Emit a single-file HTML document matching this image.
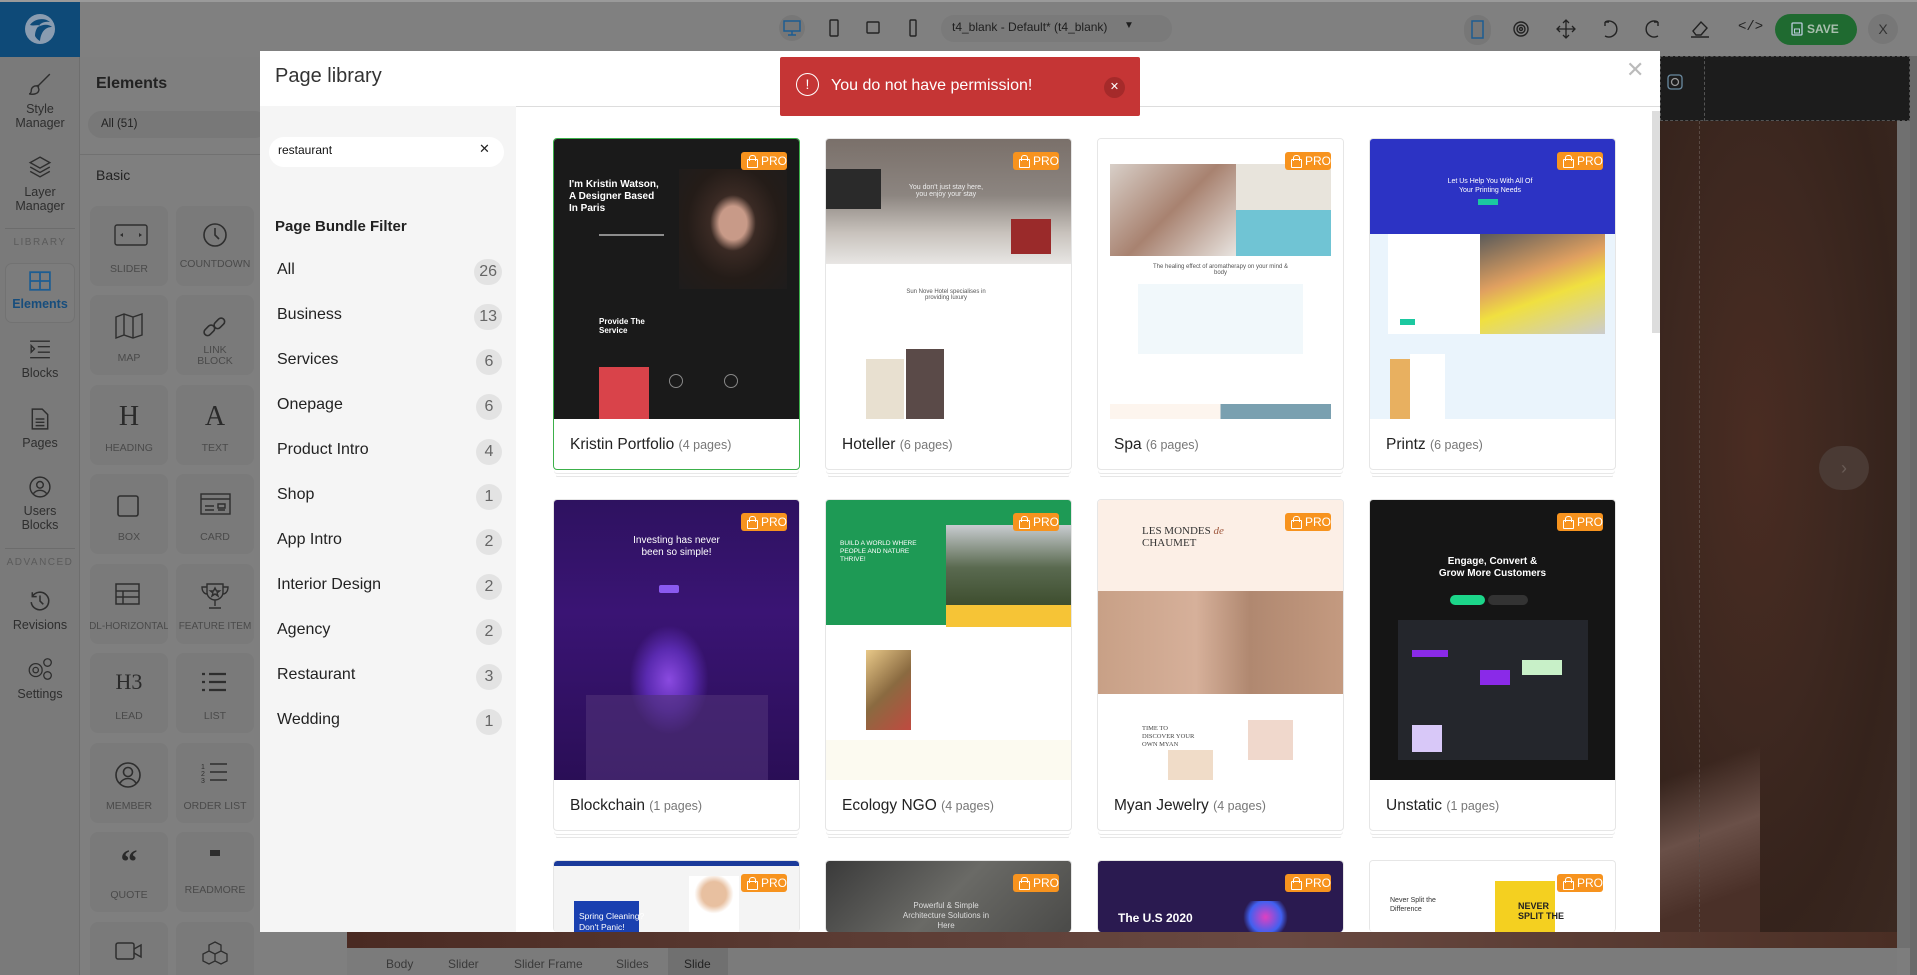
<!DOCTYPE html>
<html><head><meta charset="utf-8">
<style>
*{box-sizing:border-box;margin:0;padding:0}
html,body{width:1917px;height:975px;overflow:hidden}
body{position:relative;background:#7d7d7d;font-family:"Liberation Sans",Arial,sans-serif;color:#222}
.a{position:absolute}
.rail{left:0;top:57px;width:80px;height:918px;background:#7a7a7a;border-right:1px solid #6e6e6e}
.ri{position:absolute;left:0;width:80px;text-align:center;font-size:12.5px;line-height:14px;color:#2e2e2e}
.ri svg{display:block;margin:0 auto 6px}
.sec{position:absolute;left:0;width:80px;text-align:center;font-size:10px;letter-spacing:1.5px;color:#5b5b5b}
.hr{position:absolute;left:5px;width:70px;height:1px;background:#6c6c6c}
.panel{left:80px;top:57px;width:272px;height:918px;background:#7f7f7f;border-right:1px solid #6d6d6d;overflow:hidden}
.tile{position:absolute;width:78px;height:80px;background:#7a7a7a;border-radius:8px;text-align:center;font-size:10.5px;color:#4a4a4a;overflow:hidden}
.tile svg{position:absolute;left:24px;top:18px}
.tile span{position:absolute;left:0;right:0;top:57px}
.modal{left:260px;top:51px;width:1400px;height:881px;background:#fff;overflow:hidden}
.side{left:0;top:55px;width:256px;height:826px;background:#f5f5f5}
.cat{position:absolute;left:17px;width:225px;font-size:16px;color:#222}
.bd{position:absolute;right:0;top:-2px;height:26px;min-width:26px;padding:0 5px;border-radius:13px;background:#e3e3e3;color:#666;font-size:16px;line-height:26px;text-align:center}
.card{position:absolute;width:247px;height:332px;background:#fff;border:1px solid #e6e6e6;border-radius:4px;box-shadow:0 4px 0 -1px #fff,0 5px 0 -1px #e8e8e8,0 9px 0 -3px #fff,0 10px 0 -3px #e6e6e6}
.card.r3{height:72px;box-shadow:none;border-bottom:none;overflow:hidden}
.card.r3 .img{height:72px}
.img{position:absolute;left:0;top:0;width:245px;height:280px;overflow:hidden;border-radius:3px 3px 0 0}
.lbl{position:absolute;left:16px;top:297px;font-size:15.5px;color:#222;white-space:nowrap}
.lbl small{font-size:12.5px;color:#777}
.pro{position:absolute;right:12px;top:13px;width:46px;height:18px;background:#f7931e;border-radius:3px;color:#fff;font-size:12px;line-height:18px;padding-left:20px}
.pro:before{content:"";position:absolute;left:6px;top:7px;width:9px;height:7px;border:1.3px solid #fff;border-radius:1px}
.pro:after{content:"";position:absolute;left:8px;top:3px;width:5px;height:5px;border:1.3px solid #fff;border-bottom:none;border-radius:3px 3px 0 0}
.ln{position:absolute;height:2px;background:rgba(255,255,255,.5)}
.bc{position:absolute;top:957px;font-size:12px;color:#3a3a3a}
</style></head><body>

<!-- top bar -->
<div class="a" style="left:0;top:0;width:1917px;height:57px;background:#808080"></div>
<div class="a" style="left:0;top:0;width:1917px;height:2px;background:#9a9a9a"></div>
<div class="a" style="left:0;top:2px;width:80px;height:55px;background:#0e4a78"></div>
<svg class="a" style="left:24px;top:13px" width="32" height="32" viewBox="0 0 32 32"><circle cx="16" cy="16" r="15" fill="#8a9cb0"/><path d="M6 12c4-6 14-8 20-3-5-1-10 1-12 5 5-3 11-3 14 0-6 0-11 4-12 14-2-1-4-3-5-5 0-5 2-9 5-11-4 0-7 1-10 0z" fill="#0e4a78"/></svg>
<div class="a" style="left:779px;top:15px;width:26px;height:26px;border-radius:13px;background:#777"></div>
<svg class="a" style="left:783px;top:20px" width="18" height="16" viewBox="0 0 18 16" fill="none" stroke="#1d5d92" stroke-width="1.5"><rect x="1" y="1" width="16" height="10"/><path d="M9 11v4M5 15h8"/></svg>
<svg class="a" style="left:829px;top:19px" width="10" height="18"><rect x="1" y="1" width="8" height="16" rx="1" fill="none" stroke="#222" stroke-width="1.4"/></svg>
<svg class="a" style="left:866px;top:21px" width="14" height="13"><rect x="1" y="1" width="12" height="11" rx="1" fill="none" stroke="#222" stroke-width="1.4"/></svg>
<svg class="a" style="left:909px;top:19px" width="8" height="18"><rect x="1" y="1" width="6" height="16" rx="1" fill="none" stroke="#222" stroke-width="1.4"/></svg>
<div class="a" style="left:941px;top:15px;width:231px;height:27px;border-radius:13px;background:#7a7a7a"></div>
<div class="a" style="left:952px;top:20px;font-size:12px;color:#1e1e1e">t4_blank - Default* (t4_blank)</div>
<div class="a" style="left:1124px;top:20px;font-size:10px;color:#1e1e1e">▼</div>
<div class="a" style="left:1464px;top:15px;width:27px;height:30px;border-radius:13px;background:#777"></div>
<svg class="a" style="left:1471px;top:20px" width="13" height="19"><rect x="1" y="1" width="11" height="17" fill="none" stroke="#1d5d92" stroke-width="1.5"/></svg>
<svg class="a" style="left:1512px;top:21px" width="18" height="16" viewBox="0 0 18 16" fill="none" stroke="#222" stroke-width="1.4"><circle cx="9" cy="8" r="7"/><circle cx="9" cy="8" r="4"/><circle cx="9" cy="8" r="1.5"/></svg>
<svg class="a" style="left:1556px;top:19px" width="20" height="20" viewBox="0 0 20 20" fill="none" stroke="#222" stroke-width="1.3"><path d="M10 1v18M1 10h18M7 4l3-3 3 3M7 16l3 3 3-3M4 7l-3 3 3 3M16 7l3 3-3 3"/></svg>
<svg class="a" style="left:1600px;top:19px" width="18" height="20" viewBox="0 0 18 20" fill="none" stroke="#222" stroke-width="1.4"><path d="M5 3a8 8 0 1 1 0 14M5 3h4M5 3v4"/></svg>
<svg class="a" style="left:1645px;top:19px" width="18" height="20" viewBox="0 0 18 20" fill="none" stroke="#222" stroke-width="1.4"><path d="M13 3a8 8 0 1 0 0 14M13 3H9M13 3v4"/></svg>
<svg class="a" style="left:1690px;top:20px" width="20" height="18" viewBox="0 0 20 18" fill="none" stroke="#222" stroke-width="1.4"><path d="M3 11l8-9 6 6-6 7H6zM1 17h18"/></svg>
<div class="a" style="left:1738px;top:19px;font-size:14px;color:#222;font-family:'Liberation Mono',monospace">&lt;/&gt;</div>
<div class="a" style="left:1775px;top:14px;width:82px;height:31px;border-radius:16px;background:#1f6a30"></div>
<svg class="a" style="left:1791px;top:22px" width="12" height="14"><rect x="1" y="1" width="10" height="12" rx="1" fill="none" stroke="#bcd" stroke-width="1.3"/><rect x="3.5" y="7" width="5" height="4" fill="none" stroke="#bcd"/></svg>
<div class="a" style="left:1807px;top:22px;font-size:12px;font-weight:bold;color:#a8bfae">SAVE</div>
<div class="a" style="left:1868px;top:14px;width:30px;height:30px;border-radius:15px;background:#777;font-size:14px;color:#333;text-align:center;line-height:30px">X</div>

<!-- left rail -->
<div class="a rail"></div>
<div class="ri" style="top:72px"><svg width="24" height="24" viewBox="0 0 22 22" fill="none" stroke="#2e2e2e" stroke-width="1.3"><path d="M20 2L9 13M9 13c-3-1-6 1-6 4 0 2-1 3-2 3 4 1 9 0 9-4zM8 12l2 2"/></svg>Style<br>Manager</div>
<div class="ri" style="top:155px"><svg width="24" height="24" viewBox="0 0 22 22" fill="none" stroke="#2e2e2e" stroke-width="1.3"><path d="M11 2l9 5-9 5-9-5zM2 11l9 5 9-5M2 15l9 5 9-5"/></svg>Layer<br>Manager</div>
<div class="hr" style="top:228px"></div>
<div class="sec" style="top:237px">LIBRARY</div>
<div class="a" style="left:5px;top:263px;width:70px;height:60px;border:1px solid #727272;border-radius:7px;background:#7c7c7c"></div>
<div class="ri" style="top:271px;color:#174d7c;font-weight:bold"><svg width="22" height="20" viewBox="0 0 20 18" fill="none" stroke="#1d5d92" stroke-width="1.6"><rect x="1" y="1" width="18" height="16"/><path d="M10 1v16M1 9h18"/></svg>Elements</div>
<div class="ri" style="top:340px"><svg width="22" height="20" viewBox="0 0 20 18" fill="none" stroke="#2e2e2e" stroke-width="1.3"><path d="M1 1h18M8 6h11M8 11h11M1 16h18M2 5l3 3-3 3z"/></svg>Blocks</div>
<div class="ri" style="top:408px"><svg width="18" height="22" viewBox="0 0 16 20" fill="none" stroke="#2e2e2e" stroke-width="1.3"><path d="M1 1h9l5 5v13H1zM4 10h8M4 13h8M4 16h8"/></svg>Pages</div>
<div class="ri" style="top:476px"><svg width="22" height="22" viewBox="0 0 20 20" fill="none" stroke="#2e2e2e" stroke-width="1.3"><circle cx="10" cy="10" r="9"/><circle cx="10" cy="8" r="3"/><path d="M4 16c3-4 9-4 12 0"/></svg>Users<br>Blocks</div>
<div class="hr" style="top:548px"></div>
<div class="sec" style="top:557px">ADVANCED</div>
<div class="ri" style="top:590px"><svg width="22" height="22" viewBox="0 0 20 20" fill="none" stroke="#2e2e2e" stroke-width="1.4"><path d="M3 6a8 8 0 1 1-1 5M3 2v4h4M10 5v5l3 3"/></svg>Revisions</div>
<div class="ri" style="top:657px"><svg width="28" height="24" viewBox="0 0 26 22" fill="none" stroke="#2e2e2e" stroke-width="1.2"><circle cx="9" cy="12" r="6"/><circle cx="9" cy="12" r="2.5"/><circle cx="20" cy="5" r="3.5"/><circle cx="20" cy="17" r="3.5"/></svg>Settings</div>

<!-- elements panel -->
<div class="a panel">
<div class="a" style="left:16px;top:18px;font-size:16px;font-weight:bold;color:#222">Elements</div>
<div class="a" style="left:8px;top:54px;width:180px;height:27px;border-radius:14px;background:#787878"></div>
<div class="a" style="left:21px;top:61px;font-size:11.5px;color:#222">All (51)</div>
<div class="a" style="left:0;top:97px;width:272px;height:1px;background:#717171"></div>
<div class="a" style="left:16px;top:110px;font-size:14px;color:#222">Basic</div>

<div class="tile" style="left:10px;top:149px"><svg width="34" height="22"><rect x="1" y="1" width="32" height="20" rx="2" fill="none" stroke="#2e2e2e" stroke-width="1.4"/><path d="M6 11l3-2v4zM28 11l-3-2v4z" fill="#2e2e2e"/></svg><span>SLIDER</span></div>
<div class="tile" style="left:96px;top:149px"><svg width="30" height="30" style="left:24px;top:14px"><circle cx="15" cy="15" r="11" fill="none" stroke="#2e2e2e" stroke-width="1.6"/><path d="M15 8v7l4 4" fill="none" stroke="#2e2e2e" stroke-width="1.6"/></svg><span style="top:52px">COUNTDOWN</span></div>
<div class="tile" style="left:10px;top:238px"><svg width="30" height="26" viewBox="0 0 30 26" fill="none" stroke="#2e2e2e" stroke-width="1.4"><path d="M2 4l8-3 9 3 9-3v21l-9 3-9-3-8 3zM10 1v21M19 4v21"/></svg><span>MAP</span></div>
<div class="tile" style="left:96px;top:238px"><svg width="30" height="30" viewBox="0 0 30 30" fill="none" stroke="#2e2e2e" stroke-width="1.6"><rect x="3" y="14" width="12" height="7" rx="3.5" transform="rotate(-45 9 17)"/><rect x="13" y="7" width="12" height="7" rx="3.5" transform="rotate(-45 19 10)"/></svg><span style="top:50px;line-height:11px">LINK<br>BLOCK</span></div>
<div class="tile" style="left:10px;top:328px"><span style="top:16px;font-size:28px;font-family:'Liberation Serif',serif;color:#2a2a2a">H</span><span>HEADING</span></div>
<div class="tile" style="left:96px;top:328px"><span style="top:16px;font-size:28px;font-family:'Liberation Serif',serif;color:#2a2a2a">A</span><span>TEXT</span></div>
<div class="tile" style="left:10px;top:417px"><svg width="28" height="28"><rect x="4" y="4" width="20" height="20" rx="2" fill="none" stroke="#2e2e2e" stroke-width="1.6"/></svg><span>BOX</span></div>
<div class="tile" style="left:96px;top:417px"><svg width="32" height="24"><rect x="1" y="2" width="29" height="20" fill="none" stroke="#2e2e2e" stroke-width="1.4"/><path d="M1 7h29M5 14h9M5 18h9M18 12h7v4h-7zM18 18h7" stroke="#2e2e2e" stroke-width="1.4" fill="none"/></svg><span>CARD</span></div>
<div class="tile" style="left:10px;top:507px"><svg width="28" height="24"><rect x="2" y="2" width="23" height="20" fill="none" stroke="#2e2e2e" stroke-width="1.5"/><path d="M2 9h23M2 15h23M9 9v13" stroke="#2e2e2e" stroke-width="1.5"/></svg><span style="font-size:10px;left:-4px;right:-4px">DL-HORIZONTAL</span></div>
<div class="tile" style="left:96px;top:507px"><svg width="30" height="28" viewBox="0 0 30 28" fill="none" stroke="#2e2e2e" stroke-width="1.4"><path d="M7 2h16v8a8 8 0 0 1-16 0zM7 5H2c0 5 3 7 5 7M23 5h5c0 5-3 7-5 7M15 18v6M9 26h12M15 6l1.5 3h3l-2.5 2 1 3-3-2-3 2 1-3-2.5-2h3z"/></svg><span style="font-size:10px;left:-4px;right:-4px">FEATURE ITEM</span></div>
<div class="tile" style="left:10px;top:596px"><span style="top:16px;font-size:22px;font-family:'Liberation Serif',serif;color:#2a2a2a">H3</span><span>LEAD</span></div>
<div class="tile" style="left:96px;top:596px"><svg width="28" height="24"><path d="M2 3h3M2 11h3M2 19h3M9 3h17M9 11h17M9 19h17" stroke="#2e2e2e" stroke-width="2.2"/></svg><span>LIST</span></div>
<div class="tile" style="left:10px;top:686px"><svg width="28" height="28" viewBox="0 0 28 28" fill="none" stroke="#2e2e2e" stroke-width="1.6"><circle cx="14" cy="14" r="12"/><circle cx="14" cy="11" r="4.5"/><path d="M6 22c4-6 12-6 16 0"/></svg><span>MEMBER</span></div>
<div class="tile" style="left:96px;top:686px"><svg width="28" height="24"><path d="M10 3h17M10 11h17M10 19h17" stroke="#2e2e2e" stroke-width="1.6"/><text x="1" y="8" font-size="7" font-family="Liberation Sans" fill="#2e2e2e">1</text><text x="1" y="15" font-size="7" font-family="Liberation Sans" fill="#2e2e2e">2</text><text x="1" y="22" font-size="7" font-family="Liberation Sans" fill="#2e2e2e">3</text></svg><span>ORDER LIST</span></div>
<div class="tile" style="left:10px;top:775px"><span style="top:12px;font-size:34px;font-family:'Liberation Serif',serif;color:#2a2a2a;font-weight:bold">&#8220;</span><span>QUOTE</span></div>
<div class="tile" style="left:96px;top:775px"><svg width="30" height="10" style="top:16px"><path d="M10 2h5v6h-5zM15 2h5v6h-5z" fill="#2e2e2e"/></svg><span style="top:52px">READMORE</span></div>
<div class="tile" style="left:10px;top:865px;height:53px;border-radius:8px 8px 0 0"><svg width="30" height="22"><rect x="2" y="3" width="18" height="16" rx="2" fill="none" stroke="#2e2e2e" stroke-width="1.5"/><path d="M20 9l7-4v12l-7-4" fill="none" stroke="#2e2e2e" stroke-width="1.5"/></svg></div>
<div class="tile" style="left:96px;top:865px;height:53px;border-radius:8px 8px 0 0"><svg width="30" height="28" viewBox="0 0 30 28" fill="none" stroke="#2e2e2e" stroke-width="1.3"><path d="M15 2l6 3v6l-6 3-6-3V5zM9 11l6 3v7l-6 3-6-3v-7zM21 11l6 3v7l-6 3-6-3v-7z"/></svg></div>
</div>

<!-- canvas right -->
<div class="a" style="left:1660px;top:56px;width:250px;height:65px;background:#1c1c1c;border:1px dashed #555"></div>
<div class="a" style="left:1704px;top:56px;width:1px;height:65px;border-left:1px dashed #555"></div>
<svg class="a" style="left:1667px;top:74px" width="16" height="16"><rect x="1" y="1" width="14" height="14" rx="3" fill="none" stroke="#6a8aa0" stroke-width="1.3"/><circle cx="8" cy="8" r="3.5" fill="none" stroke="#999" stroke-width="1.3"/></svg>
<div class="a" style="left:1660px;top:121px;width:237px;height:811px;background:radial-gradient(ellipse at 40% 40%,#4a2c22 0%,#3e2820 40%,#35231c 70%,#3a2820 100%)"></div>
<div class="a" style="left:1660px;top:500px;width:100px;height:432px;background:linear-gradient(160deg,transparent 60%,#6a5048 75%,#4a3028 90%)"></div>
<div class="a" style="left:1819px;top:446px;width:50px;height:44px;border-radius:25px;background:#4a3a34;color:#6a5c56;font-size:18px;text-align:center;line-height:44px">&#8250;</div>
<div class="a" style="left:1897px;top:121px;width:13px;height:827px;background:#707070"></div>
<div class="a" style="left:1910px;top:56px;width:7px;height:919px;background:#6a6a6a"></div>
<div class="a" style="left:1699px;top:121px;width:0;height:811px;border-left:1px dashed #5a4a44"></div>

<!-- bottom strip & breadcrumbs -->
<div class="a" style="left:347px;top:932px;width:1550px;height:16px;background:linear-gradient(90deg,#4a2a22,#5a3a32 30%,#6a4a42 60%,#4a2e24)"></div>
<div class="a" style="left:347px;top:948px;width:1550px;height:27px;background:#7b7b7b"></div>
<div class="a" style="left:668px;top:948px;width:60px;height:27px;background:#707070"></div>
<div class="bc" style="left:386px">Body</div>
<div class="bc" style="left:448px">Slider</div>
<div class="bc" style="left:514px">Slider Frame</div>
<div class="bc" style="left:616px">Slides</div>
<div class="bc" style="left:684px;color:#222">Slide</div>

<!-- modal -->
<div class="a modal">
  <div class="a" style="left:15px;top:14px;font-size:20px;color:#333">Page library</div>
  <div class="a" style="left:1366px;top:6px;font-size:22px;color:#bbb;font-weight:300">&#10005;</div>
  <div class="a" style="left:0;top:55px;width:1400px;height:1px;background:#ddd"></div>
  <div class="a side">
    <div class="a" style="left:9px;top:31px;width:235px;height:30px;border-radius:15px;background:#fff"></div>
    <div class="a" style="left:18px;top:37px;font-size:12px;color:#111">restaurant</div>
    <div class="a" style="left:219px;top:35px;font-size:13px;color:#222">&#10005;</div>
    <div class="a" style="left:15px;top:112px;font-size:15px;font-weight:bold;color:#222">Page Bundle Filter</div>
    <div class="cat" style="top:155px">All<span class="bd">26</span></div>
    <div class="cat" style="top:200px">Business<span class="bd">13</span></div>
    <div class="cat" style="top:245px">Services<span class="bd">6</span></div>
    <div class="cat" style="top:290px">Onepage<span class="bd">6</span></div>
    <div class="cat" style="top:335px">Product Intro<span class="bd">4</span></div>
    <div class="cat" style="top:380px">Shop<span class="bd">1</span></div>
    <div class="cat" style="top:425px">App Intro<span class="bd">2</span></div>
    <div class="cat" style="top:470px">Interior Design<span class="bd">2</span></div>
    <div class="cat" style="top:515px">Agency<span class="bd">2</span></div>
    <div class="cat" style="top:560px">Restaurant<span class="bd">3</span></div>
    <div class="cat" style="top:605px">Wedding<span class="bd">1</span></div>
  </div>
  <div class="a" style="left:1392px;top:60px;width:8px;height:222px;background:#ddd"></div>

  <!-- row 1 -->
  <div class="card" style="left:293px;top:87px;border-color:#3cb04a">
    <div class="img" style="background:#1a1a1a">
      <div class="a" style="left:125px;top:30px;width:108px;height:120px;background:radial-gradient(ellipse at 50% 45%,#c89a88 0 18%,#3a2a24 30%,#241c18 60%,#1e1c1c)"></div>
      <div class="a" style="left:15px;top:40px;font-size:10px;color:#fff;line-height:12px;font-weight:bold">I'm Kristin Watson,<br>A Designer Based<br>In Paris</div>
      <div class="ln" style="left:45px;top:95px;width:65px"></div>
      <div class="a" style="left:45px;top:178px;font-size:8px;color:#fff;line-height:9px;font-weight:bold">Provide The<br>Service</div>
      <div class="a" style="left:45px;top:228px;width:50px;height:52px;background:#d9434a"></div>
      <div class="a" style="left:115px;top:235px;width:14px;height:14px;border:1px solid #888;border-radius:7px"></div>
      <div class="a" style="left:170px;top:235px;width:14px;height:14px;border:1px solid #888;border-radius:7px"></div>
    </div>
    <div class="pro">PRO</div>
    <div class="lbl">Kristin Portfolio <small>(4 pages)</small></div>
  </div>
  <div class="card" style="left:565px;top:87px">
    <div class="img" style="background:#fff">
      <div class="a" style="left:0;top:0;width:245px;height:125px;background:linear-gradient(180deg,#7a706a 0,#8c8580 45%,#c8c2bc 75%,#e8e6e4)"></div>
      <div class="a" style="left:0;top:30px;width:55px;height:40px;background:#2a2a2a"></div>
      <div class="a" style="left:185px;top:80px;width:40px;height:35px;background:#9a2a2a"></div>
      <div class="a" style="left:60px;top:45px;font-size:7px;color:#eee;text-align:center;width:120px">You don't just stay here,<br>you enjoy your stay</div>
      <div class="a" style="left:60px;top:150px;font-size:6px;color:#555;text-align:center;width:120px">Sun Nove Hotel specialises in<br>providing luxury</div>
      <div class="a" style="left:40px;top:220px;width:38px;height:60px;background:#e8e0d0"></div>
      <div class="a" style="left:80px;top:210px;width:38px;height:70px;background:#5a4a48"></div>
    </div>
    <div class="pro">PRO</div>
    <div class="lbl">Hoteller <small>(6 pages)</small></div>
  </div>
  <div class="card" style="left:837px;top:87px">
    <div class="img" style="background:#fff">
      <div class="a" style="left:12px;top:25px;width:126px;height:92px;background:linear-gradient(135deg,#d8cfc8,#a88270 50%,#e8e4e0)"></div>
      <div class="a" style="left:138px;top:25px;width:95px;height:46px;background:#e8e4dc"></div>
      <div class="a" style="left:138px;top:71px;width:95px;height:46px;background:#70c4d4"></div>
      <div class="a" style="left:40px;top:145px;width:165px;height:70px;background:#f1f8fb"></div>
      <div class="a" style="left:50px;top:125px;font-size:6px;color:#555;width:145px;text-align:center">The healing effect of aromatherapy on your mind &amp; body</div>
      <div class="a" style="left:12px;top:265px;width:221px;height:15px;background:linear-gradient(90deg,#fdf5ee 50%,#7aa0b0 50%)"></div>
    </div>
    <div class="pro">PRO</div>
    <div class="lbl">Spa <small>(6 pages)</small></div>
  </div>
  <div class="card" style="left:1109px;top:87px">
    <div class="img" style="background:#eaf4fc">
      <div class="a" style="left:0;top:0;width:245px;height:95px;background:#2c33c4"></div>
      <div class="a" style="left:50px;top:38px;font-size:7px;color:#fff;text-align:center;width:140px;line-height:9px">Let Us Help You With All Of<br>Your Printing Needs</div>
      <div class="a" style="left:108px;top:60px;width:20px;height:6px;background:#1cc8a0"></div>
      <div class="a" style="left:18px;top:95px;width:92px;height:100px;background:#fff"></div>
      <div class="a" style="left:110px;top:95px;width:125px;height:100px;background:linear-gradient(160deg,#5a5a5a,#e0a060 40%,#f0e040 60%,#ccc)"></div>
      <div class="a" style="left:30px;top:180px;width:15px;height:6px;background:#1cc8a0"></div>
      <div class="a" style="left:20px;top:220px;width:50px;height:60px;background:#e8b060"></div>
      <div class="a" style="left:40px;top:215px;width:35px;height:65px;background:#fff"></div>
    </div>
    <div class="pro">PRO</div>
    <div class="lbl">Printz <small>(6 pages)</small></div>
  </div>

  <!-- row 2 -->
  <div class="card" style="left:293px;top:448px">
    <div class="img" style="background:linear-gradient(180deg,#2e1260,#3a1474 40%,#2a0e56)">
      <div class="a" style="left:40px;top:35px;font-size:10px;color:#fff;text-align:center;width:165px;line-height:12px">Investing has never<br>been so simple!</div>
      <div class="a" style="left:105px;top:85px;width:20px;height:8px;background:#8a5af0;border-radius:2px"></div>
      <div class="a" style="left:75px;top:125px;width:80px;height:110px;background:radial-gradient(ellipse,#8a4ae0 0,#5a2ab0 40%,transparent 70%)"></div>
      <div class="a" style="left:32px;top:195px;width:182px;height:85px;background:rgba(80,50,120,.6)"></div>
    </div>
    <div class="pro">PRO</div>
    <div class="lbl">Blockchain <small>(1 pages)</small></div>
  </div>
  <div class="card" style="left:565px;top:448px">
    <div class="img" style="background:#fff">
      <div class="a" style="left:0;top:0;width:245px;height:125px;background:#1e9a55"></div>
      <div class="a" style="left:120px;top:25px;width:125px;height:85px;background:linear-gradient(180deg,#c8ccd0,#5a6a50 50%,#3a4a2a)"></div>
      <div class="a" style="left:120px;top:105px;width:125px;height:22px;background:#f6c436"></div>
      <div class="a" style="left:14px;top:40px;font-size:6.5px;color:#fff;line-height:8px">BUILD A WORLD WHERE<br>PEOPLE AND NATURE<br>THRIVE!</div>
      <div class="a" style="left:40px;top:150px;width:45px;height:80px;background:linear-gradient(135deg,#e8c888,#8a6a40,#c04a40)"></div>
      <div class="a" style="left:0;top:240px;width:245px;height:40px;background:#fcfaf0"></div>
    </div>
    <div class="pro">PRO</div>
    <div class="lbl">Ecology NGO <small>(4 pages)</small></div>
  </div>
  <div class="card" style="left:837px;top:448px">
    <div class="img" style="background:#fff">
      <div class="a" style="left:0;top:0;width:245px;height:91px;background:#fcefe6"></div>
      <div class="a" style="left:44px;top:25px;font-size:11px;color:#333;font-family:'Liberation Serif',serif;line-height:12px">LES MONDES <i style="color:#a05a40">de</i><br>CHAUMET</div>
      <div class="a" style="left:0;top:91px;width:245px;height:103px;background:linear-gradient(90deg,#c8a086,#d6b09a 40%,#b08870 62%,#c49a80)"></div>
      <div class="a" style="left:44px;top:225px;font-size:6.5px;color:#444;font-family:'Liberation Serif',serif;line-height:8px">TIME TO<br>DISCOVER YOUR<br>OWN MYAN</div>
      <div class="a" style="left:150px;top:220px;width:45px;height:40px;background:#f0d8cc"></div>
      <div class="a" style="left:70px;top:250px;width:45px;height:30px;background:#f0dcc8"></div>
    </div>
    <div class="pro">PRO</div>
    <div class="lbl">Myan Jewelry <small>(4 pages)</small></div>
  </div>
  <div class="card" style="left:1109px;top:448px">
    <div class="img" style="background:#151515">
      <div class="a" style="left:30px;top:56px;font-size:10px;color:#fff;text-align:center;width:185px;line-height:12px;font-weight:bold">Engage, Convert &amp;<br>Grow More Customers</div>
      <div class="a" style="left:80px;top:95px;width:35px;height:10px;background:#1cd68a;border-radius:5px"></div>
      <div class="a" style="left:118px;top:95px;width:40px;height:10px;background:#333;border-radius:5px"></div>
      <div class="a" style="left:28px;top:120px;width:190px;height:140px;background:#24262c"></div>
      <div class="a" style="left:42px;top:150px;width:36px;height:7px;background:#8a2ae8"></div>
      <div class="a" style="left:110px;top:170px;width:30px;height:15px;background:#8a2ae8"></div>
      <div class="a" style="left:152px;top:160px;width:40px;height:15px;background:#c8f0c8"></div>
      <div class="a" style="left:42px;top:225px;width:30px;height:27px;background:#d8c8f8"></div>
    </div>
    <div class="pro">PRO</div>
    <div class="lbl">Unstatic <small>(1 pages)</small></div>
  </div>

  <!-- row 3 -->
  <div class="card r3" style="left:293px;top:809px">
    <div class="img" style="background:#f4f4f4">
      <div class="a" style="left:0;top:0;width:245px;height:5px;background:#1a3a9a"></div>
      <div class="a" style="left:20px;top:40px;width:65px;height:40px;background:#1a40b0"></div>
      <div class="a" style="left:25px;top:50px;font-size:8.5px;color:#fff;line-height:11px">Spring Cleaning?<br>Don't Panic!</div>
      <div class="a" style="left:135px;top:15px;width:50px;height:60px;background:radial-gradient(circle at 50% 30%,#e8c0a0 0 25%,#fff 40%)"></div>
    </div>
    <div class="pro">PRO</div>
  </div>
  <div class="card r3" style="left:565px;top:809px">
    <div class="img" style="background:linear-gradient(135deg,#3a3a3a,#6a6a66 50%,#4a4a48)">
      <div class="a" style="left:50px;top:40px;font-size:8px;color:#ddd;text-align:center;width:140px;line-height:10px">Powerful &amp; Simple<br>Architecture Solutions in<br>Here</div>
    </div>
    <div class="pro">PRO</div>
  </div>
  <div class="card r3" style="left:837px;top:809px">
    <div class="img" style="background:#2a1a50">
      <div class="a" style="left:20px;top:50px;font-size:12px;color:#fff;font-weight:bold">The U.S 2020</div>
      <div class="a" style="left:140px;top:40px;width:55px;height:32px;background:radial-gradient(circle,#e040c0,#4060f0 50%,transparent 70%)"></div>
    </div>
    <div class="pro">PRO</div>
  </div>
  <div class="card r3" style="left:1109px;top:809px">
    <div class="img" style="background:#fff">
      <div class="a" style="left:20px;top:35px;font-size:7px;color:#333;line-height:9px">Never Split the<br>Difference</div>
      <div class="a" style="left:125px;top:20px;width:60px;height:52px;background:#f4d020"></div>
      <div class="a" style="left:148px;top:40px;font-size:9px;color:#222;font-weight:bold;line-height:10px">NEVER<br>SPLIT THE</div>
    </div>
    <div class="pro">PRO</div>
  </div>
</div>

<!-- toast -->
<div class="a" style="left:780px;top:57px;width:360px;height:59px;background:#c53535;border-radius:2px"></div>
<div class="a" style="left:796px;top:73px;width:23px;height:23px;border:1.6px solid #fff;border-radius:12px;color:#fff;font-size:14px;text-align:center;line-height:20px">!</div>
<div class="a" style="left:831px;top:77px;font-size:16px;color:#fff">You do not have permission!</div>
<div class="a" style="left:1104px;top:77px;width:21px;height:21px;border-radius:11px;background:#a52a2a;color:#fff;font-size:11px;text-align:center;line-height:21px">&#10005;</div>
</body></html>
